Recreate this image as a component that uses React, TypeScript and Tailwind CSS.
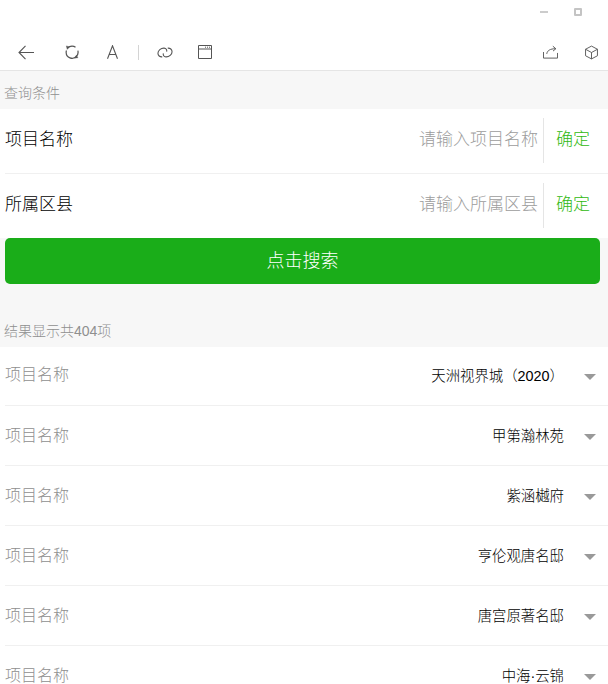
const font = "font-['Liberation_Sans','Noto_Sans_CJK_SC',sans-serif] font-light";

const results = [
  "天洲视界城（2020）",
  "甲第瀚林苑",
  "紫涵樾府",
  "亨伦观唐名邸",
  "唐宫原著名邸",
  "中海·云锦",
];

function Toolbar() {
  return (
    <div className="flex h-[36px] items-center border-b border-[#e5e5e5] bg-white pb-[1px] text-[#555]">
      <svg className="ml-[18px] h-[15px] w-[16px]" viewBox="0 0 16 15" fill="none" stroke="currentColor" strokeWidth="1.100">
        <path d="M16 7.500H1M7.500.8 1 7.500l6.500 6.700" />
      </svg>
      <svg className="ml-[31px] h-[14px] w-[14px]" viewBox="0 0 16 16" fill="none" stroke="currentColor" strokeWidth="1.400">
        <path d="M3 3.500A6.800 6.800 0 0 1 8 1.200c1.500 0 3 .5 4 1.300M14.700 6.500A6.800 6.800 0 0 1 13 13M13 13a6.800 6.800 0 0 1-11.700-4.500c0-.8.100-1.500.4-2.200" />
        <path d="M1.500 1 5 2 2.500 5zM11 15l3.800-.5-1.800-3z" fill="currentColor" strokeWidth="0.4" />
      </svg>
      <svg className="ml-[28px] h-[14px] w-[11px]" viewBox="0 0 11 14" fill="none" stroke="currentColor" strokeWidth="1.100">
        <path d="M.5 13.800 5.500.8l5 13M2.200 9.500h6.600" />
      </svg>
      <div className="ml-[20px] h-[15px] w-px bg-[#d4d4d4]" />
      <svg className="ml-[18px] h-[11px] w-[16px]" viewBox="0 0 17 12" fill="none" stroke="currentColor" strokeWidth="1.200">
        <path d="M5.500 10.800C2.800 11 .8 9.300.8 6.800.8 3.800 4 1 7.500 1.200c2.300.1 3.300 2 2.800 3.800" />
        <path d="M11.500 1.200c2.700-.2 4.700 1.500 4.700 4 0 3-3.200 5.800-6.700 5.600C7.200 10.700 6.200 8.800 6.700 7" />
      </svg>
      <svg className="ml-[25px] h-[14px] w-[14px]" viewBox="0 0 14 14" fill="none" stroke="currentColor" strokeWidth="1">
        <path d="M.5.500h13v13H.500zM.500 4h13" />
        <path d="M7 2.200h1M9 2.200h1M11 2.200h1" />
      </svg>
      <div className="flex-1" />
      <svg className="h-[14px] w-[15px]" viewBox="0 0 16 14" fill="none" stroke="currentColor" strokeWidth="1">
        <path d="M.5 7v6.500h15V8M4 9c.5-3.500 3.500-5.500 9.500-5.500M10.500.8l3.200 2.700-3 2.500" />
      </svg>
      <svg className="ml-[27px] mr-[10px] h-[15px] w-[13px]" viewBox="0 0 14 15" fill="none" stroke="currentColor" strokeWidth="1">
        <path d="M7 .6 13.400 4v7L7 14.400.6 11V4zM.6 4 7 7.500 13.400 4M7 7.500v6.900" />
      </svg>
    </div>
  );
}

function ConditionRow({ label, placeholder }: { label: string; placeholder: string }) {
  return (
    <div className="flex h-[64px] items-center pb-[1px] pl-[5px] text-[17px]">
      <span className="pb-[2px] text-black">{label}</span>
      <div className="flex-1 pb-[2px] pr-[5px] text-right text-[#9c9c9c]">{placeholder}</div>
      <div className="flex h-[45px] w-[65px] items-center border-l border-[#e5e5e5] pb-[2px] pl-[12px] text-[#2fb90f]">确定</div>
    </div>
  );
}

export default function App() {
  return (
    <div className={`h-[684px] w-[608px] overflow-hidden bg-[#f7f7f7] ${font}`}>
      {/* Title bar */}
      <div className="flex h-[35px] items-start justify-end bg-white pt-[8px]">
        <div className="mr-[26px] mt-[3px] h-[2px] w-[8px] bg-[#ccc]" />
        <div className="mr-[26px] h-[8px] w-[8px] rounded-[1px] border-2 border-[#c4c4c4]" />
      </div>
      <Toolbar />

      <div className="flex h-[38px] items-center pl-[4px] pt-[6px] text-[14px] text-[#8f8f8f]">查询条件</div>
      <div className="bg-white">
        <ConditionRow label="项目名称" placeholder="请输入项目名称" />
        <div className="ml-[5px] h-px bg-[#f0f0f0]" />
        <ConditionRow label="所属区县" placeholder="请输入所属区县" />
      </div>
      <div className="px-[5px]">
        <button className="flex h-[46px] w-[595px] items-center justify-center rounded-[5px] bg-[#1aad19] text-[18px] text-white">
          点击搜索
        </button>
      </div>

      <div className="mt-[30px] flex h-[33px] items-center pl-[4px] pt-[2px] text-[14px] text-[#8f8f8f]">结果显示共404项</div>
      <div className="bg-white">
        {results.map((name, i) => (
          <div
            key={name}
            className={`ml-[5px] flex items-center ${i > 0 ? "h-[60px] border-t border-[#f0f0f0]" : "h-[58px]"}`}
          >
            <span className={`text-[16px] text-[#8f8f8f] ${i > 0 ? "" : "pb-[2px]"}`}>项目名称</span>
            <span className="flex-1 pr-[20px] pt-[2px] text-right text-[14.4px] text-black">{name}</span>
            <div className="mr-[12px] mt-[2px] h-0 w-0 border-x-[6px] border-t-[6px] border-x-transparent border-t-[#999]" />
          </div>
        ))}
      </div>
    </div>
  );
}
